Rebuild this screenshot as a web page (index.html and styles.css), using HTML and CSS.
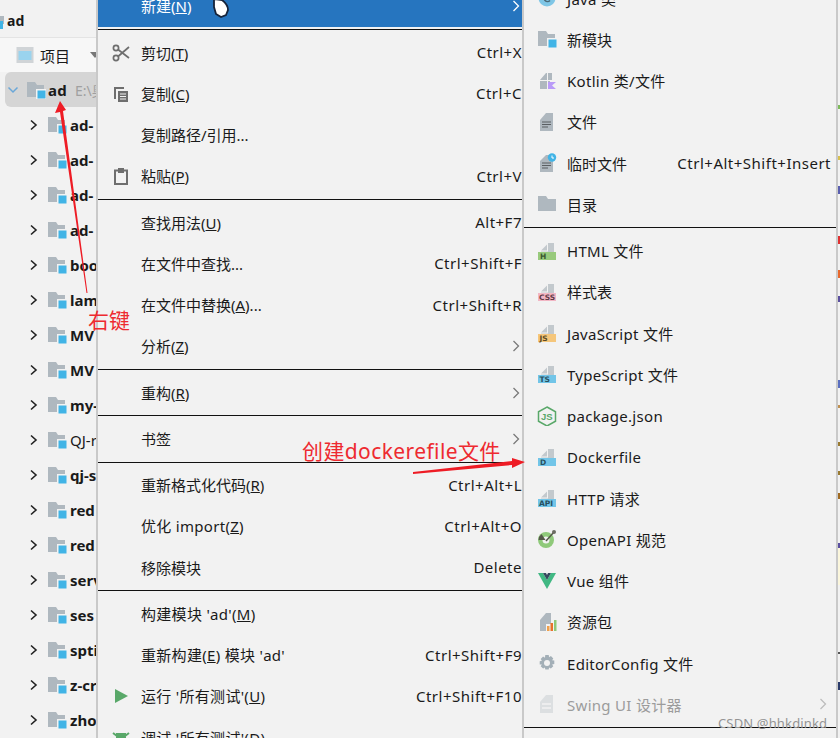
FILE: index.html
```html
<!DOCTYPE html>
<html lang="zh">
<head>
<meta charset="utf-8">
<title>New menu</title>
<link rel="stylesheet" href="styles.css">
</head>
<body>
<svg class="defs" width="0" height="0" aria-hidden="true">
  <defs>
    <symbol id="mod" viewBox="0 0 20 20">
      <path d="M1 2h8l2 3h7v12H1z" fill="#afb8bf"/>
      <rect x="10" y="9" width="10" height="10" fill="#f2f2f2"/>
      <rect x="11.500" y="10.500" width="8" height="8" fill="#41b4e6"/>
    </symbol>
    <symbol id="next" viewBox="0 0 12 12">
      <path d="M3 1.500L8 6l-5 4.500" fill="none" stroke="#222" stroke-width="1.600"/>
    </symbol>
    <symbol id="more" viewBox="0 0 8 12">
      <path d="M1.500 1l5 5-5 5" fill="none" stroke="currentColor" stroke-width="1.300"/>
    </symbol>
    <symbol id="page" viewBox="0 0 20 20">
      <path d="M4 9.500L10 3.500V9.500zM11 2h6v9H4v-.5h7z" fill="#c3c9cd"/>
    </symbol>
  </defs>
</svg>
<div class="screen">
  <aside class="tree">
    <div class="title"><svg class="t-ic" viewBox="0 0 8 20"><rect x="-6" y="5" width="10" height="8" fill="#afb8bf"/><rect x="-1" y="10" width="4" height="8" fill="#41b4e6"/></svg><b>ad</b></div>
    <div class="view"><svg class="view-ic" viewBox="0 0 18 18"><rect x="0.5" y="1" width="17" height="16" fill="#d0d4d7"/><rect x="2.5" y="5" width="13" height="9" fill="#9ad3ee"/></svg><span>项目</span><i class="caret"></i></div>
    <div class="root">
      <svg class="chev" viewBox="0 0 12 12"><path d="M1.500 3.500L6 8l4.500-4.500" fill="none" stroke="#6aa7d8" stroke-width="1.500"/></svg>
      <svg class="ic"><use href="#mod"/></svg><b>ad</b><span class="path">E:\奥</span>
    </div>
    <ul class="nodes">
      <li><svg class="chev"><use href="#next"/></svg><svg class="ic"><use href="#mod"/></svg><b>ad-</b></li>
      <li><svg class="chev"><use href="#next"/></svg><svg class="ic"><use href="#mod"/></svg><b>ad-</b></li>
      <li><svg class="chev"><use href="#next"/></svg><svg class="ic"><use href="#mod"/></svg><b>ad-</b></li>
      <li><svg class="chev"><use href="#next"/></svg><svg class="ic"><use href="#mod"/></svg><b>ad-</b></li>
      <li><svg class="chev"><use href="#next"/></svg><svg class="ic"><use href="#mod"/></svg><b>boo</b></li>
      <li><svg class="chev"><use href="#next"/></svg><svg class="ic"><use href="#mod"/></svg><b>lam</b></li>
      <li><svg class="chev"><use href="#next"/></svg><svg class="ic"><use href="#mod"/></svg><b>MV</b></li>
      <li><svg class="chev"><use href="#next"/></svg><svg class="ic"><use href="#mod"/></svg><b>MV</b></li>
      <li><svg class="chev"><use href="#next"/></svg><svg class="ic"><use href="#mod"/></svg><b>my-</b></li>
      <li><svg class="chev"><use href="#next"/></svg><svg class="ic"><use href="#mod"/></svg><span>QJ-r</span></li>
      <li><svg class="chev"><use href="#next"/></svg><svg class="ic"><use href="#mod"/></svg><b>qj-s</b></li>
      <li><svg class="chev"><use href="#next"/></svg><svg class="ic"><use href="#mod"/></svg><b>red</b></li>
      <li><svg class="chev"><use href="#next"/></svg><svg class="ic"><use href="#mod"/></svg><b>red</b></li>
      <li><svg class="chev"><use href="#next"/></svg><svg class="ic"><use href="#mod"/></svg><b>serv</b></li>
      <li><svg class="chev"><use href="#next"/></svg><svg class="ic"><use href="#mod"/></svg><b>ses</b></li>
      <li><svg class="chev"><use href="#next"/></svg><svg class="ic"><use href="#mod"/></svg><b>spti</b></li>
      <li><svg class="chev"><use href="#next"/></svg><svg class="ic"><use href="#mod"/></svg><b>z-cr</b></li>
      <li><svg class="chev"><use href="#next"/></svg><svg class="ic"><use href="#mod"/></svg><b>zho</b></li>
    </ul>
  </aside>

  <nav class="menu">
    <div class="row active"><span class="gutter"></span><span class="lbl">新建(<u>N</u>)</span><svg class="sub"><use href="#more"/></svg></div>
    <hr>
    <div class="row"><span class="gutter"><svg class="mi" viewBox="0 0 18 18"><g fill="none" stroke="#6e6e6e" stroke-width="1.700"><circle cx="4" cy="4" r="2.600"/><circle cx="4" cy="14" r="2.600"/><path d="M6 5.500L17 14M6 12.500L17 3"/></g></svg></span><span class="lbl">剪切(<u>T</u>)</span><span class="key">Ctrl+X</span></div>
    <div class="row"><span class="gutter"><svg class="mi" viewBox="0 0 18 18"><path d="M2 2h10v2H4v10H2z" fill="#6e6e6e"/><path d="M6 6h10v11H6z" fill="#6e6e6e"/><path d="M8 9h6M8 11.500h6M8 14h6" stroke="#f2f2f2" stroke-width="1.200"/></svg></span><span class="lbl">复制(<u>C</u>)</span><span class="key">Ctrl+C</span></div>
    <div class="row"><span class="gutter"></span><span class="lbl">复制路径/引用...</span></div>
    <div class="row"><span class="gutter"><svg class="mi" viewBox="0 0 18 18"><path d="M3 3.500h12v13.500H3z" fill="none" stroke="#6e6e6e" stroke-width="2"/><rect x="6" y="1" width="6" height="5" fill="#6e6e6e"/></svg></span><span class="lbl">粘贴(<u>P</u>)</span><span class="key">Ctrl+V</span></div>
    <hr>
    <div class="row"><span class="gutter"></span><span class="lbl">查找用法(<u>U</u>)</span><span class="key">Alt+F7</span></div>
    <div class="row"><span class="gutter"></span><span class="lbl">在文件中查找...</span><span class="key">Ctrl+Shift+F</span></div>
    <div class="row"><span class="gutter"></span><span class="lbl">在文件中替换(<u>A</u>)...</span><span class="key">Ctrl+Shift+R</span></div>
    <div class="row muted"><span class="gutter"></span><span class="lbl">分析(<u>Z</u>)</span><svg class="sub"><use href="#more"/></svg></div>
    <hr>
    <div class="row muted"><span class="gutter"></span><span class="lbl">重构(<u>R</u>)</span><svg class="sub"><use href="#more"/></svg></div>
    <hr>
    <div class="row muted"><span class="gutter"></span><span class="lbl">书签</span><svg class="sub"><use href="#more"/></svg></div>
    <hr>
    <div class="row"><span class="gutter"></span><span class="lbl">重新格式化代码(<u>R</u>)</span><span class="key">Ctrl+Alt+L</span></div>
    <div class="row"><span class="gutter"></span><span class="lbl lat">优化 import(<u>Z</u>)</span><span class="key">Ctrl+Alt+O</span></div>
    <div class="row"><span class="gutter"></span><span class="lbl">移除模块</span><span class="key">Delete</span></div>
    <hr>
    <div class="row"><span class="gutter"></span><span class="lbl lat">构建模块 'ad'(<u>M</u>)</span></div>
    <div class="row"><span class="gutter"></span><span class="lbl lat">重新构建(<u>E</u>) 模块 'ad'</span><span class="key">Ctrl+Shift+F9</span></div>
    <div class="row"><span class="gutter"><svg class="mi" viewBox="0 0 18 18"><path d="M3 2l13 7-13 7z" fill="#59a869"/></svg></span><span class="lbl lat">运行 '所有测试'(<u>U</u>)</span><span class="key">Ctrl+Shift+F10</span></div>
    <div class="row"><span class="gutter"><svg class="mi" viewBox="0 0 18 18"><path d="M5 5h8v10H5zM1 4l4 3M17 4l-4 3M1 10h4M17 10h-4M2 16l3-3M16 16l-3-3" fill="#59a869" stroke="#59a869" stroke-width="2"/></svg></span><span class="lbl lat">调试 '所有测试'(<u>D</u>)</span></div>
  </nav>

  <nav class="menu submenu">
    <div class="row"><span class="gutter"><svg class="si" viewBox="0 0 20 20"><circle cx="10" cy="10" r="8.500" fill="#7fc6e6"/><path d="M13 7.500a3.500 3.500 0 1 0 0 5" fill="none" stroke="#4a6a78" stroke-width="1.500"/></svg></span><span class="lbl lat">Java 类</span></div>
    <div class="row"><span class="gutter"><svg class="si"><use href="#mod"/></svg></span><span class="lbl">新模块</span></div>
    <div class="row"><span class="gutter"><svg class="si" viewBox="0 0 20 20"><path d="M3 9l6-7h1v7zM11 2h4v7h-4zM3 10h7v8H3zM11 10h2v1h-2z" fill="#afb8bf"/><path d="M11 11h8l-4 3.500 4 3.500h-8z" fill="#b99bf8"/></svg></span><span class="lbl lat">Kotlin 类/文件</span></div>
    <div class="row"><span class="gutter"><svg class="si" viewBox="0 0 20 20"><path d="M3 8l6-7h7v18H3z" fill="#afb8bf"/><path d="M5 10h9M5 12.500h9M5 15h6" stroke="#5a5f63" stroke-width="1.200"/></svg></span><span class="lbl">文件</span></div>
    <div class="row"><span class="gutter"><svg class="si" viewBox="0 0 20 20"><path d="M3 8l6-6h7v17H3z" fill="#afb8bf"/><path d="M5 10h9M5 12.500h9M5 15h6" stroke="#5a5f63" stroke-width="1.200"/><circle cx="15" cy="4.500" r="4.200" fill="#41b4e6"/><path d="M15 2.500v2.500h2" fill="none" stroke="#fff" stroke-width="1"/></svg></span><span class="lbl">临时文件</span><span class="key">Ctrl+Alt+Shift+Insert</span></div>
    <div class="row"><span class="gutter"><svg class="si" viewBox="0 0 20 20"><path d="M1 2h8l2 3h8v12H1z" fill="#afb8bf"/></svg></span><span class="lbl">目录</span></div>
    <hr>
    <div class="row"><span class="gutter"><svg class="si" viewBox="0 0 20 20"><use href="#page"/><rect x="1" y="11" width="18" height="8" fill="#98ca7c"/><text x="3" y="18" class="tag" fill="#3c5a30">H</text></svg></span><span class="lbl lat">HTML 文件</span></div>
    <div class="row"><span class="gutter"><svg class="si" viewBox="0 0 20 20"><use href="#page"/><rect x="1" y="11" width="18" height="8" fill="#f2b6c4"/><text x="2" y="18" class="tag" fill="#5f3a44">CSS</text></svg></span><span class="lbl">样式表</span></div>
    <div class="row"><span class="gutter"><svg class="si" viewBox="0 0 20 20"><use href="#page"/><rect x="1" y="11" width="18" height="8" fill="#f5c67b"/><text x="2.500" y="18" class="tag" fill="#5c4a22">JS</text></svg></span><span class="lbl lat">JavaScript 文件</span></div>
    <div class="row"><span class="gutter"><svg class="si" viewBox="0 0 20 20"><use href="#page"/><rect x="1" y="11" width="18" height="8" fill="#72c5e8"/><text x="2.500" y="18" class="tag" fill="#27505f">TS</text></svg></span><span class="lbl lat">TypeScript 文件</span></div>
    <div class="row"><span class="gutter"><svg class="si" viewBox="0 0 20 20"><path d="M10 1l8.500 4.800v9.400L10 20l-8.500-4.800V5.800z" fill="none" stroke="#59a869" stroke-width="1.500"/><text x="4" y="14" class="js" fill="#59a869">JS</text></svg></span><span class="lbl lat">package.json</span></div>
    <div class="row"><span class="gutter"><svg class="si" viewBox="0 0 20 20"><use href="#page"/><rect x="1" y="11" width="18" height="8" fill="#72c5e8"/><text x="3" y="18" class="tag" fill="#27505f">D</text></svg></span><span class="lbl lat">Dockerfile</span></div>
    <div class="row"><span class="gutter"><svg class="si" viewBox="0 0 20 20"><use href="#page"/><rect x="1" y="11" width="18" height="8" fill="#72c5e8"/><text x="2" y="18" class="tag" fill="#27505f">API</text></svg></span><span class="lbl lat">HTTP 请求</span></div>
    <div class="row"><span class="gutter"><svg class="si" viewBox="0 0 20 20"><circle cx="9" cy="11" r="8" fill="#8fc97a"/><circle cx="9" cy="11" r="3.500" fill="#f2f2f2"/><path d="M1.500 11a8 8 0 0 1 3-6l4 6z" fill="#55584a"/><path d="M9 12l8-9" stroke="#55584a" stroke-width="1.500"/><circle cx="17" cy="3" r="2" fill="#6b6b62"/></svg></span><span class="lbl lat">OpenAPI 规范</span></div>
    <div class="row"><span class="gutter"><svg class="si" viewBox="0 0 20 20"><path d="M1 2h5l4 7 4-7h5l-9 16z" fill="#41b883"/><path d="M6 2h3l1 2 1-2h3l-4 7z" fill="#35495e"/></svg></span><span class="lbl lat">Vue 组件</span></div>
    <div class="row"><span class="gutter"><svg class="si" viewBox="0 0 20 20"><path d="M3 8l6-7h5v18H3z" fill="#afb8bf"/><rect x="9" y="12" width="11" height="8" fill="#f2f2f2"/><rect x="10" y="14" width="2.500" height="5" fill="#f0a04b"/><rect x="13.500" y="11" width="2.500" height="8" fill="#e8722c"/><rect x="17" y="8" width="2.500" height="11" fill="#8fc97a"/></svg></span><span class="lbl">资源包</span></div>
    <div class="row"><span class="gutter"><svg class="si" viewBox="0 0 20 20"><path d="M8.300 2h3.400l.400 2.200 1.800-1.200 2.400 2.400-1.200 1.800 2.200.4v3.400l-2.200.4 1.200 1.800-2.400 2.400-1.800-1.200-.4 2.200H8.300l-.4-2.200-1.800 1.200-2.400-2.400 1.200-1.800L2.700 11.600V8.200l2.200-.4-1.200-1.800 2.400-2.400 1.800 1.200z" fill="#a3afb7"/><circle cx="10" cy="10" r="3" fill="#f2f2f2"/></svg></span><span class="lbl lat">EditorConfig 文件</span></div>
    <div class="row off"><span class="gutter"><svg class="si" viewBox="0 0 20 20"><path d="M3 8l6-7h7v18H3z" fill="#dcdfe1"/><path d="M5 10h9M5 14h9" stroke="#f2f2f2" stroke-width="1.500"/></svg></span><span class="lbl lat">Swing UI 设计器</span><svg class="sub"><use href="#more"/></svg></div>
    <hr>
  </nav>

  <div class="edge"></div>

  <svg class="marks" viewBox="0 0 840 738" aria-hidden="true">
    <path d="M60 101L66 110 63 111 87.500 293 86.500 293 60 112 55 113z" fill="#ee1c25"/>
    <path d="M413 472L512 461 512 458 525 462 512 468 512 465 413 474z" fill="#ee1c25"/>
    <path d="M214 -1L222 0C226 3 228 6 228 10L226 15 221 17 216 14 214 7z" fill="#fff" stroke="#15233a" stroke-width="1.800"/>
  </svg>
  <span class="note note-a">右键</span>
  <span class="note note-b">创建dockerefile文件</span>
  <span class="wm">CSDN @hhkdinkd</span>
</div>
</body>
</html>
```
FILE: styles.css
```css
* { box-sizing: border-box; }
html, body { margin: 0; padding: 0; height: 100%; overflow: hidden; background: #f2f2f2; }
body { font-family: "Noto Sans", "Noto Sans CJK SC", sans-serif; font-size: 15px; color: #1a1a1a; }
.defs { display: block; height: 0; }
.screen { position: relative; display: flex; width: 840px; height: 738px; overflow: hidden; }

.tree { width: 98px; flex: none; border-right: 2px solid #c9c9c9; background: #f2f2f2; overflow: hidden; white-space: nowrap; }
.title { display: flex; align-items: center; height: 38px; padding-top: 4px; border-bottom: 1px solid #e4e4e4; }
.title b { margin-left: -1px; font-size: 14px; }
.t-ic { width: 8px; height: 20px; flex: none; }
.view { display: flex; align-items: center; height: 34px; padding-left: 16px; background: #f7f7f7; }
.view span { margin-left: 6px; flex: none; }
.view-ic { width: 18px; height: 18px; flex: none; }
.caret { flex: none; margin-left: 20px; border: 5px solid transparent; border-top: 6px solid #777; border-bottom: 0; }
.root { display: flex; align-items: center; height: 35px; margin-left: 5px; padding-left: 2px; background: #d5d5d5; border-radius: 6px 0 0 6px; }
.root .ic { margin-left: 7px; }
.root b { margin-left: 2px; letter-spacing: .3px; }
.path { margin-left: 8px; color: #a0a0a0; font-size: 14px; }
.chev { width: 12px; height: 12px; flex: none; }
.ic { width: 20px; height: 20px; flex: none; }
.nodes { list-style: none; margin: 0; padding: 0; }
.nodes li { display: flex; align-items: center; height: 35px; padding-left: 28px; }
.nodes .ic { margin-left: 7px; }
.nodes b, .nodes span { margin-left: 3px; }

.menu { width: 424px; flex: none; margin-top: -14.25px; background: #f2f2f2; }
.row { display: flex; align-items: center; height: 41.25px; white-space: nowrap; }
.row > .lbl { margin-bottom: 1px; }
.key { margin-bottom: 1px; letter-spacing: .5px; }
.active { background: #2675bf; color: #fff; }
.muted .sub { color: #7a7a7a; }
.gutter { display: flex; align-items: center; justify-content: center; flex: none; width: 43px; padding-left: 3px; }
.lbl { flex: 1; }
.lat { letter-spacing: .3px; }
.sub { width: 8px; height: 12px; margin-right: 2px; flex: none; }
.mi { width: 18px; height: 18px; }
hr { height: 1px; margin: 2px 0; border: 0; background: #111; }

.submenu { width: 316px; border-left: 2px solid #c9c9c9; border-right: 2px solid #c9c9c9; margin-top: -22.5px; }
.submenu .row > .lbl, .submenu .key { margin-bottom: 0; }
.submenu .gutter { width: 43px; padding: 0 0 0 2px; }
.submenu .key { padding-right: 5px; }
.submenu .sub { margin-right: 9px; }
.si { width: 20px; height: 20px; }
.off { color: #9c9c9c; }
.off .sub { color: #bdbdbd; }
.tag { font: 700 7.500px "DejaVu Sans", sans-serif; }
.js { font: 700 9.500px "Liberation Sans", sans-serif; }

.edge { flex: 1; background: linear-gradient(#f2f2f2 105px, #7dbb5a 105px, #7dbb5a 109px, #f2f2f2 109px, #f2f2f2 156px, #d8c050 156px, #d8c050 160px, #f2f2f2 160px, #f2f2f2 186px, #5a5fb0 186px, #5a5fb0 194px, #f2f2f2 194px, #f2f2f2 236px, #e03030 236px, #e03030 244px, #f2f2f2 244px, #f2f2f2 270px, #e8682c 270px, #e8682c 278px, #f2f2f2 278px, #f2f2f2 296px, #5a4fa0 296px, #5a4fa0 302px, #f2f2f2 302px, #f2f2f2 380px, #5a6fc0 380px, #5a6fc0 388px, #f2f2f2 388px, #f2f2f2 405px, #c09050 405px, #c09050 408px, #f2f2f2 408px, #f2f2f2 442px, #9a7a30 442px, #9a7a30 446px, #f2f2f2 446px, #f2f2f2 471px, #9a7a30 471px, #9a7a30 475px, #f2f2f2 475px, #f2f2f2 493px, #a06a20 493px, #a06a20 499px, #f2f2f2 499px, #f2f2f2 543px, #5a4fa0 543px, #5a4fa0 548px, #fbf6dc 548px, #fbf6dc 585px, #f2f2f2 585px, #f2f2f2 652px, #555 652px, #555 654px, #f2f2f2 654px, #f2f2f2 682px, #2a3a6a 682px, #2a3a6a 690px, #f2f2f2 690px); }

.marks { position: absolute; left: 0; top: 0; width: 840px; height: 738px; pointer-events: none; }
.note { position: absolute; color: #ee2a30; font-size: 21px; line-height: 1; white-space: nowrap; }
.note-a { left: 88px; top: 310px; }
.note-b { left: 302px; top: 441px; letter-spacing: .4px; }
.wm { position: absolute; left: 718px; top: 714px; color: #949494; font-size: 13px; letter-spacing: .15px; white-space: nowrap; }
```
